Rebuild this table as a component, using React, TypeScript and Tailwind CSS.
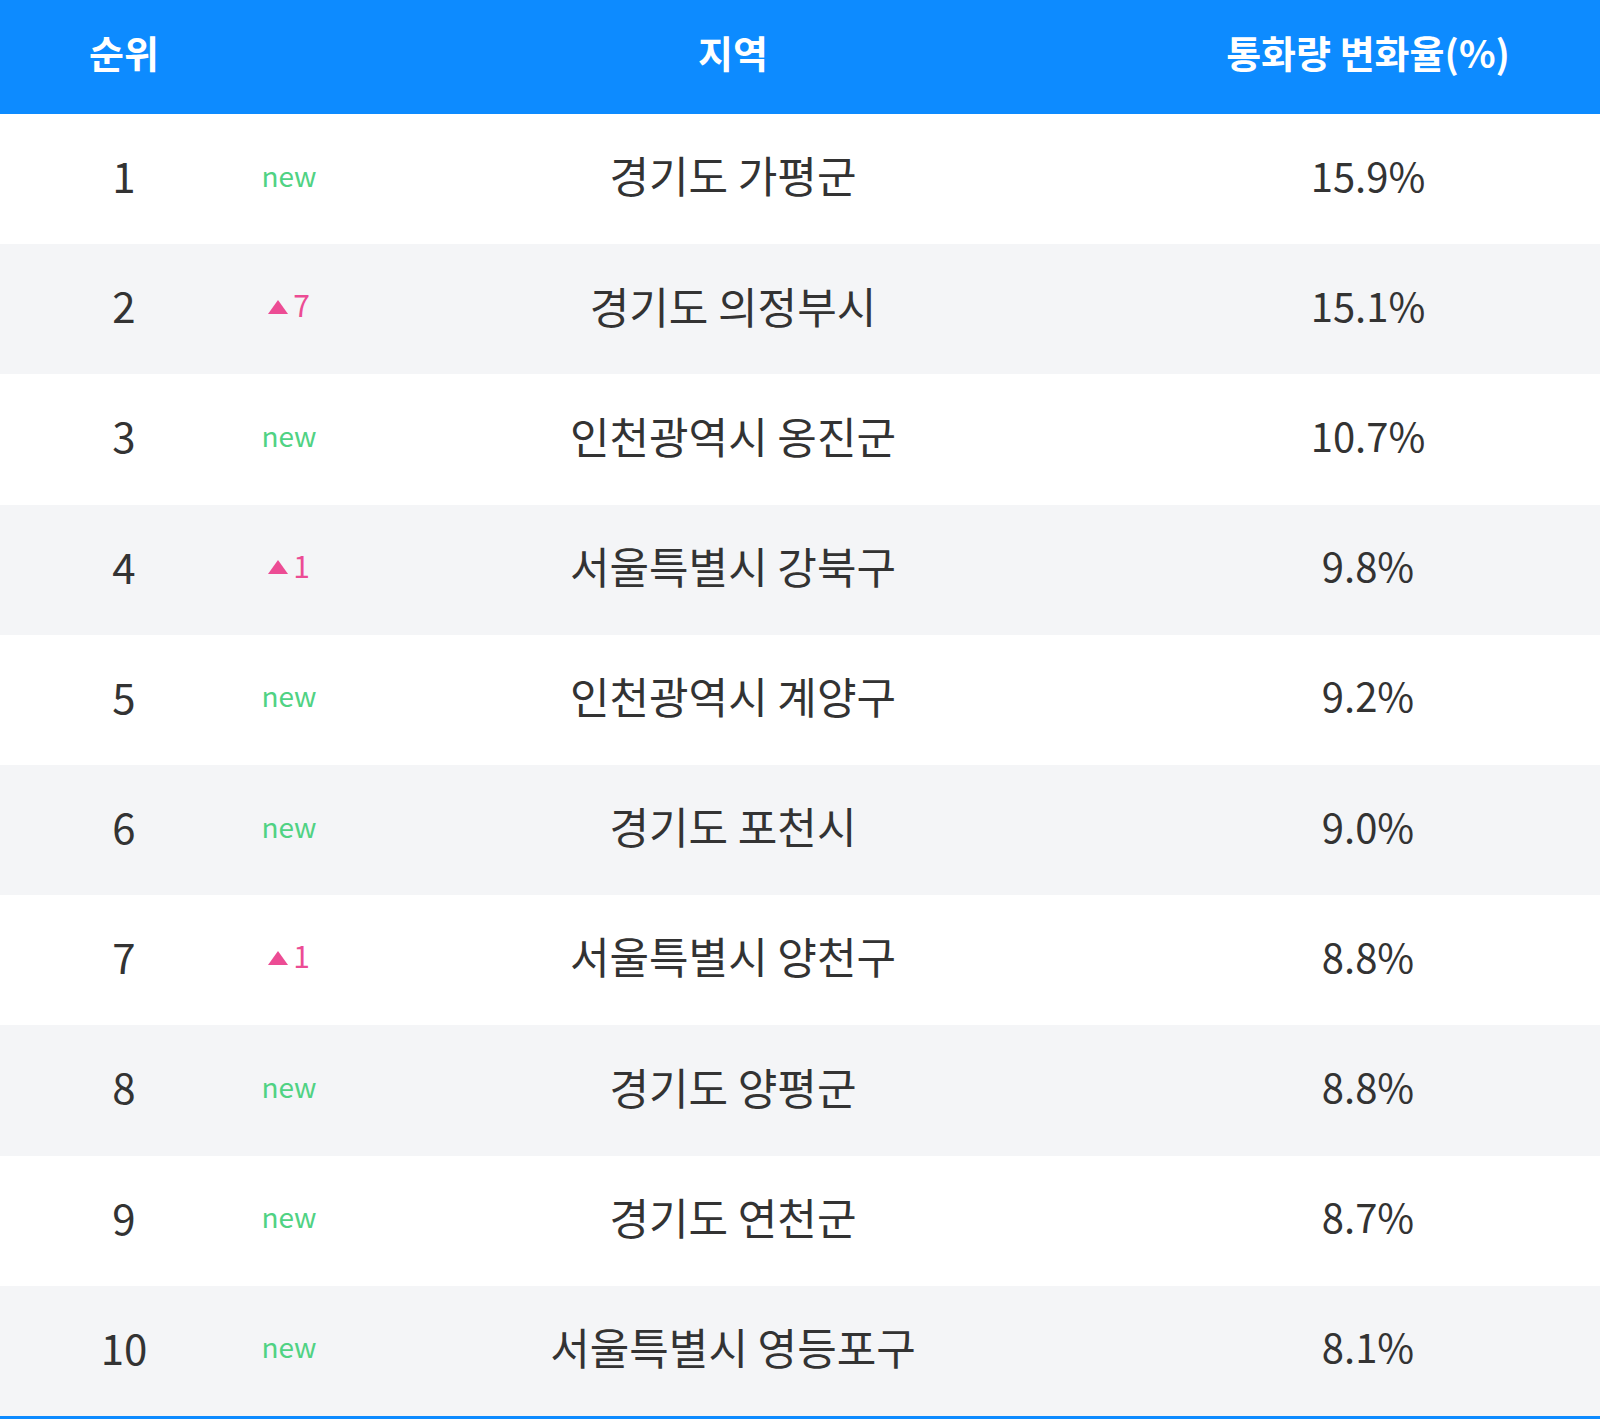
import React from "react";

type Row = { rank: number; change: { type: "new" } | { type: "up"; n: number }; region: string; rate: string };

const rows: Row[] = [
  { rank: 1, change: { type: "new" }, region: "경기도 가평군", rate: "15.9%" },
  { rank: 2, change: { type: "up", n: 7 }, region: "경기도 의정부시", rate: "15.1%" },
  { rank: 3, change: { type: "new" }, region: "인천광역시 옹진군", rate: "10.7%" },
  { rank: 4, change: { type: "up", n: 1 }, region: "서울특별시 강북구", rate: "9.8%" },
  { rank: 5, change: { type: "new" }, region: "인천광역시 계양구", rate: "9.2%" },
  { rank: 6, change: { type: "new" }, region: "경기도 포천시", rate: "9.0%" },
  { rank: 7, change: { type: "up", n: 1 }, region: "서울특별시 양천구", rate: "8.8%" },
  { rank: 8, change: { type: "new" }, region: "경기도 양평군", rate: "8.8%" },
  { rank: 9, change: { type: "new" }, region: "경기도 연천군", rate: "8.7%" },
  { rank: 10, change: { type: "new" }, region: "서울특별시 영등포구", rate: "8.1%" },
];

const font = { fontFamily: '"Noto Sans CJK KR", "Noto Sans", sans-serif' };

export default function App() {
  return (
    <div className="w-[1600px] bg-white" style={font}>
      <div className="border-b-[3px] border-[#0d8bff]">
        <div className="grid grid-cols-[248px_82px_806px_464px] h-[114px] pb-[12px] bg-[#0d8bff] text-white font-bold text-[38px] items-center">
          <div className="text-center">순위</div>
          <div />
          <div className="text-center">지역</div>
          <div className="text-center">통화량 변화율(%)</div>
        </div>
        {rows.map((r, i) => (
          <div
            key={r.rank}
            className={`grid grid-cols-[248px_82px_806px_464px] h-[130.2px] pb-[9px] items-center text-[#333333] ${
              i % 2 === 1 ? "bg-[#f4f5f7]" : "bg-white"
            }`}
          >
            <div className="text-center text-[42px]">{r.rank}</div>
            <div className="flex justify-center items-center">
              {r.change.type === "new" ? (
                <span className="text-[28px] text-[#50d283]">new</span>
              ) : (
                <span className="flex items-center gap-[5px] text-[30px] text-[#ec4c94]">
                  <svg width="20" height="14" viewBox="0 0 20 14" className="mt-[4px]">
                    <polygon points="10,0 20,14 0,14" fill="#ec4c94" />
                  </svg>
                  <span>{r.change.n}</span>
                </span>
              )}
            </div>
            <div className="text-center text-[43px]">{r.region}</div>
            <div className="text-center text-[40px]">{r.rate}</div>
          </div>
        ))}
      </div>
    </div>
  );
}
